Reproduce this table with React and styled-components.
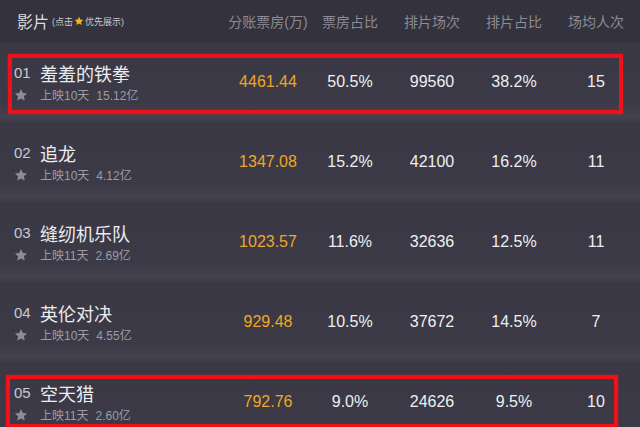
import React from 'react';
import styled, { createGlobalStyle } from 'styled-components';

const GlobalStyle = createGlobalStyle`
  html, body {
    margin: 0;
    padding: 0;
    background: #383743;
  }
  body {
    font-family: "Liberation Sans", "Noto Sans CJK SC", sans-serif;
    width: 640px;
    height: 427px;
    overflow: hidden;
  }
`;

const Board = styled.div`
  width: 640px;
  background: #383743;
`;

const HeaderRow = styled.div`
  display: grid;
  grid-template-columns: 227px repeat(5, 82px) 1fr;
  align-items: center;
  height: 42px;
  background: #33323d;
  color: #8c8b96;
  font-size: 14px;
`;

const HeaderTitle = styled.div`
  padding-left: 17px;
  display: flex;
  align-items: center;
  color: #dcdce0;
  font-size: 16px;
  small {
    font-size: 9px;
    margin-left: 3px;
    display: flex;
    align-items: center;
    gap: 1px;
    color: #c8c8cc;
  }
`;

const HeaderCell = styled.div`
  text-align: center;
`;

const Row = styled.div`
  position: relative;
  display: grid;
  grid-template-columns: 227px repeat(5, 82px) 1fr;
  align-items: center;
  height: 80px;
  background: linear-gradient(#393844 0%, #3b3a46 78%, #43424e 92%, #3d3c48 100%);

  &::after {
    content: '';
    display: ${(p) => (p.$marked ? 'block' : 'none')};
    position: absolute;
    left: ${(p) => p.$box.left}px;
    right: ${(p) => p.$box.right}px;
    top: ${(p) => p.$box.top}px;
    bottom: ${(p) => p.$box.bottom}px;
    border: 4px solid #ee1119;
    box-shadow: 0 0 2px rgba(238, 17, 25, 0.6);
    pointer-events: none;
  }
`;

const FilmCell = styled.div`
  display: grid;
  grid-template-columns: 26px 1fr;
  grid-template-rows: 25px 19px;
  padding-left: 14px;
  align-items: center;
`;

const Rank = styled.span`
  color: #cacad1;
  font-size: 15px;
`;

const Title = styled.span`
  color: #ececef;
  font-size: 18px;
  font-family: "Noto Sans CJK SC", sans-serif;
`;

const StarWrap = styled.span`
  display: flex;
  align-items: center;
`;

const Sub = styled.span`
  color: #9d9ca6;
  font-size: 12px;
  .gap {
    margin-left: 7px;
  }
`;

const Value = styled.div`
  text-align: center;
  font-size: 16px;
  color: ${(p) => (p.$gold ? '#f0a626' : '#efeff2')};
`;

const Star = ({ size = 14, color = '#8e8d97' }) => (
  <svg width={size} height={size} viewBox="0 0 24 24">
    <path
      d="M12 1.8l3.1 6.6 7.2.9-5.3 5 1.4 7.1L12 17.9l-6.4 3.5 1.4-7.1-5.3-5 7.2-.9z"
      fill={color}
    />
  </svg>
);

const films = [
  { rank: '01', title: '羞羞的铁拳', days: '上映10天', total: '15.12亿', box: '4461.44', share: '50.5%', shows: '99560', showShare: '38.2%', avg: '15', mark: { left: 8, right: 17, top: 12, bottom: 8 } },
  { rank: '02', title: '追龙', days: '上映10天', total: '4.12亿', box: '1347.08', share: '15.2%', shows: '42100', showShare: '16.2%', avg: '11' },
  { rank: '03', title: '缝纫机乐队', days: '上映11天', total: '2.69亿', box: '1023.57', share: '11.6%', shows: '32636', showShare: '12.5%', avg: '11' },
  { rank: '04', title: '英伦对决', days: '上映10天', total: '4.55亿', box: '929.48', share: '10.5%', shows: '37672', showShare: '14.5%', avg: '7' },
  { rank: '05', title: '空天猎', days: '上映11天', total: '2.60亿', box: '792.76', share: '9.0%', shows: '24626', showShare: '9.5%', avg: '10', mark: { left: 6, right: 22, top: 13, bottom: 14 } },
];

export default function App() {
  return (
    <Board>
      <GlobalStyle />
      <HeaderRow>
        <HeaderTitle>
          影片
          <small>
            (点击 <Star size={10} color="#f3b516" /> 优先展示)
          </small>
        </HeaderTitle>
        <HeaderCell>分账票房(万)</HeaderCell>
        <HeaderCell>票房占比</HeaderCell>
        <HeaderCell>排片场次</HeaderCell>
        <HeaderCell>排片占比</HeaderCell>
        <HeaderCell>场均人次</HeaderCell>
      </HeaderRow>
      {films.map((f) => (
        <Row key={f.rank} $marked={!!f.mark} $box={f.mark || {}}>
          <FilmCell>
            <Rank>{f.rank}</Rank>
            <Title>{f.title}</Title>
            <StarWrap>
              <Star />
            </StarWrap>
            <Sub>
              {f.days}
              <span className="gap">{f.total}</span>
            </Sub>
          </FilmCell>
          <Value $gold>{f.box}</Value>
          <Value>{f.share}</Value>
          <Value>{f.shows}</Value>
          <Value>{f.showShare}</Value>
          <Value>{f.avg}</Value>
        </Row>
      ))}
    </Board>
  );
}
